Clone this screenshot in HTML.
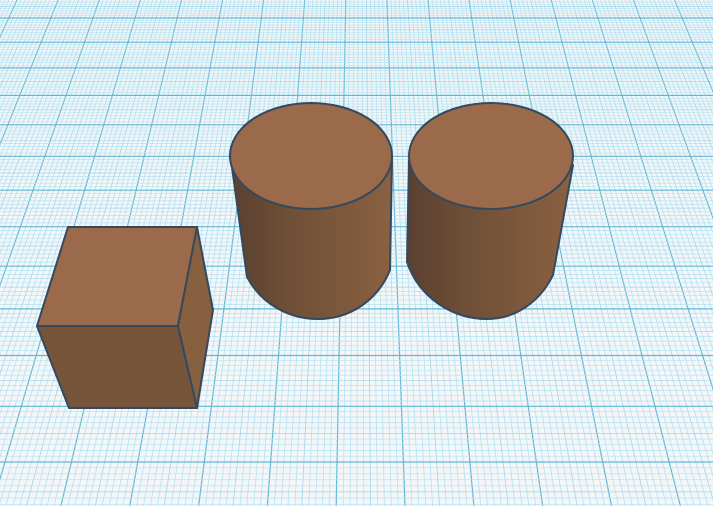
<!DOCTYPE html>
<html><head><meta charset="utf-8"><style>
html,body{margin:0;padding:0;background:#f4f6f7;width:713px;height:506px;overflow:hidden}
svg{display:block}
</style></head><body>
<svg id="s" width="713" height="506" viewBox="0 0 713 506" xmlns="http://www.w3.org/2000/svg">
<defs>
<linearGradient id="g1" x1="0" x2="1" y1="0" y2="0">
<stop offset="0" stop-color="#5a4030"/><stop offset="0.35" stop-color="#6e4f37"/><stop offset="1" stop-color="#8a6141"/>
</linearGradient>
</defs>
<rect width="713" height="506" fill="#f4f6f7"/>
<g id="grid"></g>
<g stroke="#34495e" stroke-width="2" stroke-linejoin="round">
<polygon points="68,227 197,227 178,326 37,326" fill="#9a6a4a"/>
<polygon points="37,326 178,326 197,408 69,408" fill="#76553a"/>
<polygon points="197,227 213,310 197,408 178,326" fill="#86603f"/>
</g>
<g stroke="#34495e" stroke-width="2" stroke-linejoin="round">
<path d="M231,160 L247,277 C262,305 290,319 318,319 C350,319 378,300 390,270 L392,158 Z" fill="url(#g1)"/>
<ellipse cx="311" cy="156" rx="81" ry="53" fill="#9a6a4a"/>
<path d="M409,160 L407,262 C420,300 455,319 487,319 C515,319 540,302 553,275 L573,165 Z" fill="url(#g1)"/>
<ellipse cx="491" cy="156" rx="82" ry="53" fill="#9a6a4a"/>
</g>
</svg>
<script>
(function(){
var g=document.getElementById('grid'),h='';
var xv=360,yv=-750;
function yOf(n){return yv+1/(1.3021e-3-0.03975e-3*n);}
function ln(x1,y1,x2,y2,c,w){h+='<line x1="'+x1.toFixed(1)+'" y1="'+y1.toFixed(1)+'" x2="'+x2.toFixed(1)+'" y2="'+y2.toFixed(1)+'" stroke="'+c+'" stroke-width="'+w+'"/>';}
for(var k=-400;k<=400;k++){
  var x0=17+4.11*k;
  var major=(k%10===0),mid=(k%5===0);
  var c=major?'#62b8d8':(mid?'#9fd6ea':'#b4e2f2');
  var w=major?1.2:0.8;
  var t=(506-yv)/(0-yv);
  var xb=xv+(x0-xv)*t;
  if(Math.max(x0,xb)<-5||Math.min(x0,xb)>720)continue;
  ln(x0,0,xb,506,c,w);
}
for(var m=-20;m<=150;m++){
  var n=m/10,y=yOf(n);
  if(y<-2||y>508)continue;
  var major=(m%10===0),mid=(m%5===0);
  var c=major?'#62b8d8':(mid?'#9fd6ea':'#b4e2f2');
  ln(0,y,713,y,c,major?1.2:0.7);
}
g.innerHTML=h;
})();
</script>
</body></html>
